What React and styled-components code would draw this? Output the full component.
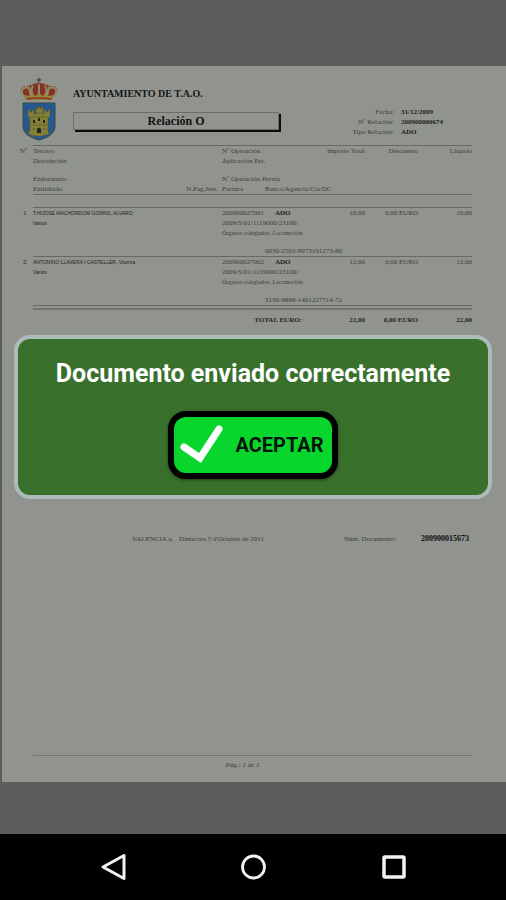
import React from "react";
import styled, { createGlobalStyle } from "styled-components";

const GlobalStyle = createGlobalStyle`
    * { box-sizing: border-box; }
    body {
        margin: 0;
        background: #000;
    }
`

const Screen = styled.div`
    display: flex;
    flex-direction: column;
    min-height: 100vh;
`

const Viewer = styled.main`
    position: relative;
    flex: 1;
    display: flex;
    padding: 66px 0 52px 2px;
    background: #5c5c5c;
`

const Sheet = styled.article`
    flex: 1;
    min-width: 0;
    display: flex;
    flex-direction: column;
    padding: 11px 34px 12px 18px;
    background: #90938e;
    color: #3c3e3b;
    font-family: "Liberation Serif", "Times New Roman", serif;
    font-size: 7px;
    line-height: 10px;
    white-space: nowrap;
`

const SheetHeader = styled.header`
    display: flex;
    height: 68px;
`

const Crest = styled.svg`
    width: 38px;
    height: 64px;
    margin-right: 15px;
`

const HeaderMain = styled.div`
    width: 206px;
    padding-top: 10px;
`

const Council = styled.h1`
    margin: 0 0 11px;
    color: #141514;
    font-size: 10px;
    line-height: 14px;
`

const RelationBox = styled.h2`
    margin: 0;
    border: 1px solid #6b6e69;
    box-shadow: 2px 2px 0 #0b0b0b;
    color: #111;
    font-size: 12px;
    line-height: 16px;
    text-align: center;
`

const Info = styled.dl`
    display: grid;
    grid-template-columns: auto 44px;
    grid-auto-rows: 10px;
    column-gap: 7px;
    margin: 30px 27px 0 auto;
    text-align: right;

    dd {
        margin: 0;
        color: #1d1e1c;
        font-weight: bold;
        text-align: left;
    }
`

const Table = styled.table`
    width: 100%;
    table-layout: fixed;
    border-spacing: 0;
    border-collapse: separate;
`

const Col = styled.col`
    width: ${(p) => p.$w}%;
`

const Row = styled.tr`
    height: ${(p) => p.$h || 10}px;

    & > * {
        padding: 0;
        font-weight: ${(p) => (p.$bold ? "bold" : "normal")};
        color: ${(p) => (p.$bold ? "#252624" : "inherit")};
        line-height: ${(p) => p.$h || 10}px;
    }

    & > :not(:first-child) {
        border-top: ${(p) => (p.$rule ? "1px solid #666965" : "0")};
    }
`

const Cell = styled.td`
    text-align: ${(p) => (p.$right ? "right" : "left")};
`

const NumberCell = styled.td`
    text-align: left;
    color: #222;

    && { padding-left: 3px; }
`

const Name = styled.span`
    font-family: "Liberation Sans", Arial, sans-serif;
    font-size: 5px;
    color: #252624;
`

const Concept = styled.span`
    font-size: 6px;
`

const Ado = styled.strong`
    margin-left: 10px;
    color: #1d1e1c;
`

const Just = styled.span`
    margin-right: 4px;
`

const DoubleRule = styled.td`
    && {
        height: 5px;
        border-top: 1px solid #666965;
        border-bottom: 2px solid #70736e;
    }
`

const Signature = styled.div`
    display: flex;
    justify-content: space-between;
    align-items: center;
    margin: 204px 3px 0 112px;
`

const Place = styled.span`
    display: flex;
    gap: 6px;
`

const DocNumber = styled.span`
    display: flex;
    gap: 25px;

    strong {
        color: #0f0f0f;
        font-size: 8px;
    }
`

const SheetFooter = styled.footer`
    margin: auto 0 0 13px;
    padding-top: 4px;
    border-top: 1px solid #72756f;
    text-align: center;
    font-style: italic;

    span { margin-right: 20px; }
`

const Overlay = styled.div`
    position: absolute;
    inset: 0;
    display: flex;
    align-items: center;
    padding: 0 14px;
`

const Dialog = styled.section`
    flex: 1;
    display: flex;
    flex-direction: column;
    align-items: center;
    gap: 22px;
    padding: 20px 12px 16px;
    border: 4px solid #aebbbb;
    border-radius: 16px;
    background: #38702c;
    font-family: Roboto, "Liberation Sans", sans-serif;
`

const Message = styled.p`
    margin: 0;
    color: #fff;
    font-size: 25px;
    font-weight: 700;
    line-height: 30px;
    text-align: center;
`

const AcceptButton = styled.button`
    display: flex;
    align-items: center;
    gap: 12px;
    height: 68px;
    padding: 0 8px 0 6px;
    border: 6px solid #000;
    border-radius: 18px;
    background: #08d62c;
    box-shadow: 0 1px 3px rgba(0, 0, 0, 0.5);
    color: #03120a;
    font: 700 20px/24px Roboto, "Liberation Sans", sans-serif;
    cursor: pointer;
`

const CheckMark = styled.svg`
    width: 43px;
    height: 40px;
    overflow: visible;
`

const NavBar = styled.nav`
    display: grid;
    grid-template-columns: repeat(3, 1fr);
    height: 66px;
    padding: 0 43px;
    background: #000;
`

const NavButton = styled.button`
    display: flex;
    align-items: center;
    justify-content: center;
    padding: 0;
    border: 0;
    background: none;
`

// relative widths, turned into percentages of the table
const columns = [13, 127, 62, 43, 37, 63, 53, 54]
const total = columns.reduce((sum, w) => sum + w, 0)

const records = [
    {
        num: 1,
        name: "T.HIJOSE MACHORDOM GOMNS, ALVARO",
        operation: "200900027001",
        account: "0030-2503-8973191273-80",
        amount: "10,00",
    },
    {
        num: 2,
        name: "ANTONINO LLAVERA I CASTELLER, Vicenta",
        operation: "200900027002",
        account: "3130-9899-1401227714-72",
        amount: "12,00",
    },
]

const CrestIcon = () => {
    return (
        <Crest viewBox="0 0 38 64" aria-hidden="true">
            {/* crown */}
            <path d="M19 1v7M17 3h4" stroke="#3a4a38" strokeWidth="1.4" />
            <path d="M5 20C-2 15 0 8 8 9c3-2 6-3 11-3s8 1 11 3c8-1 10 6 3 11l-2 3H7z" fill="#86302a" />
            <path d="M5 20C-1 15 2 9 9 11l2 8M33 20c6-5 3-11-4-9l-2 8M19 7v13M13 9c-3 4-1 8 1 11M25 9c3 4 1 8-1 11" fill="none" stroke="#918c5c" strokeWidth="2" />
            <path d="M1 14l2-3 4-2 4-1 4-2 4-1 4 1 4 2 4 1 4 2 2 3" fill="none" stroke="#8b8b6c" strokeWidth="1.6" strokeDasharray="2 1" />
            <path d="M5 18l4 1 3-2 3 2 4-3 4 3 3-2 3 2 4-1-2 5H7z" fill="#94863a" />
            <path d="M7 22q12-2 24 0" stroke="#8f2d26" strokeWidth="1.5" fill="none" />
            {/* shield */}
            <path d="M3 26h32v23c0 8-8 12-16 14C11 61 3 57 3 49z" fill="#27598c" stroke="#38474e" />
            <path d="M8 33h2v2h2v-2h2v4h2v-7h1v2h1v-2h2v2h1v-2h2v7h1v-4h2v2h2v-2h2v6l-2 2v12l1 4-8 2H14l-6-2 2-4V41l-2-2z" fill="#858038" stroke="#59592c" strokeWidth=".6" />
            <path d="M17 56v-4q2-3 4 0v4zM13 43h2v3h-2zM18 41h2v3h-2zM23 43h2v3h-2z" fill="#20241a" />
            <path d="M10 40h18M11 48h16M12 52h4M22 52h5M16 36h7" stroke="#5e602d" strokeWidth=".8" />
        </Crest>
    );
}

const Record = ({ num, name, operation, account, amount }) => {
    return (
        <tbody>
            <Row $rule>
                <NumberCell>{num}</NumberCell>
                <Cell colSpan={2}><Name>{name}</Name></Cell>
                <Cell>{operation}</Cell>
                <Cell><Ado>ADO</Ado></Cell>
                <Cell $right>{amount}</Cell>
                <Cell $right>0,00 EURO</Cell>
                <Cell $right>{amount}</Cell>
            </Row>
            <Row>
                <td />
                <Cell colSpan={2}><Name>Varios</Name></Cell>
                <Cell colSpan={5}>2009/S/01/1119000/23100/</Cell>
            </Row>
            <Row>
                <td colSpan={3} />
                <Cell colSpan={5}><Concept>Órganos colegiados. Locomoción</Concept></Cell>
            </Row>
            <Row $h={8}><td colSpan={8} /></Row>
            <Row>
                <td colSpan={4} />
                <Cell colSpan={4}>{account}</Cell>
            </Row>
        </tbody>
    );
}

const RelationTable = () => {
    return (
        <Table>
            <colgroup>
                {columns.map((w, i) => <Col key={i} $w={(w / total) * 100} />)}
            </colgroup>
            <thead>
                <Row $rule>
                    <Cell as="th">Nº</Cell>
                    <Cell as="th" colSpan={2}>Tercero</Cell>
                    <Cell as="th" colSpan={2}>Nº Operación</Cell>
                    <Cell as="th" $right>Importe Total</Cell>
                    <Cell as="th" $right>Descuento</Cell>
                    <Cell as="th" $right>Líquido</Cell>
                </Row>
                <Row>
                    <td />
                    <Cell as="th" colSpan={2}>Descripción</Cell>
                    <Cell as="th" colSpan={5}>Aplicación Ppt.</Cell>
                </Row>
                <Row $h={8}><td colSpan={8} /></Row>
                <Row>
                    <td />
                    <Cell as="th" colSpan={2}>Endosatario</Cell>
                    <Cell as="th" colSpan={5}>Nº Operación Previa</Cell>
                </Row>
                <Row>
                    <td />
                    <Cell as="th">Entibilado</Cell>
                    <Cell as="th" $right><Just>N.Pag.Just.</Just></Cell>
                    <Cell as="th">Factura</Cell>
                    <Cell as="th" colSpan={4}>Banco/Agencia/Cta/DC</Cell>
                </Row>
                <Row $h={13} $rule>
                    <td />
                    <td colSpan={7} />
                </Row>
            </thead>
            {records.map((r) => <Record key={r.num} {...r} />)}
            <tfoot>
                <tr>
                    <td />
                    <DoubleRule colSpan={7} />
                </tr>
                <Row $bold $h={20}>
                    <td colSpan={3} />
                    <Cell colSpan={2} $right>TOTAL EURO:</Cell>
                    <Cell $right>22,00</Cell>
                    <Cell $right>0,00 EURO</Cell>
                    <Cell $right>22,00</Cell>
                </Row>
            </tfoot>
        </Table>
    );
}

const App = () => {
    return (
        <Screen>
            <GlobalStyle />
            <Viewer>
                <Sheet>
                    <SheetHeader>
                        <CrestIcon />
                        <HeaderMain>
                            <Council>AYUNTAMIENTO DE T.A.O.</Council>
                            <RelationBox>Relación O</RelationBox>
                        </HeaderMain>
                        <Info>
                            <dt>Fecha:</dt>
                            <dd>31/12/2009</dd>
                            <dt>Nº Relación:</dt>
                            <dd>200900000674</dd>
                            <dt>Tipo Relación:</dt>
                            <dd>ADO</dd>
                        </Info>
                    </SheetHeader>
                    <RelationTable />
                    <Signature>
                        <Place>
                            <span>VALENCIA a,</span>
                            <span>Dimecres 5 d'Octubre de 2011</span>
                        </Place>
                        <DocNumber>
                            <span>Núm. Documento:</span>
                            <strong>200900015673</strong>
                        </DocNumber>
                    </Signature>
                    <SheetFooter><span>Pág.: 1 de 1</span></SheetFooter>
                </Sheet>
                <Overlay>
                    <Dialog role="alertdialog" aria-labelledby="message">
                        <Message id="message">Documento enviado correctamente</Message>
                        <AcceptButton type="button">
                            <CheckMark viewBox="0 0 43 40" aria-hidden="true">
                                <path d="M4 22l16 11L39 4" fill="none" stroke="#fff" strokeWidth="7" strokeLinecap="round" />
                            </CheckMark>
                            ACEPTAR
                        </AcceptButton>
                    </Dialog>
                </Overlay>
            </Viewer>
            <NavBar>
                <NavButton type="button" aria-label="Atrás">
                    <svg width="28" height="28" viewBox="0 0 28 28">
                        <path d="M25 2.500V25.500L4 14z" fill="none" stroke="#f2f2f2" strokeWidth="3" strokeLinejoin="round" />
                    </svg>
                </NavButton>
                <NavButton type="button" aria-label="Inicio">
                    <svg width="28" height="28" viewBox="0 0 28 28">
                        <circle cx="14.500" cy="14" r="11" fill="none" stroke="#f2f2f2" strokeWidth="2.800" />
                    </svg>
                </NavButton>
                <NavButton type="button" aria-label="Recientes">
                    <svg width="28" height="28" viewBox="0 0 28 28">
                        <rect x="5" y="4" width="20" height="20" rx="1" fill="none" stroke="#f2f2f2" strokeWidth="3.500" />
                    </svg>
                </NavButton>
            </NavBar>
        </Screen>
    );
}

export default App;
